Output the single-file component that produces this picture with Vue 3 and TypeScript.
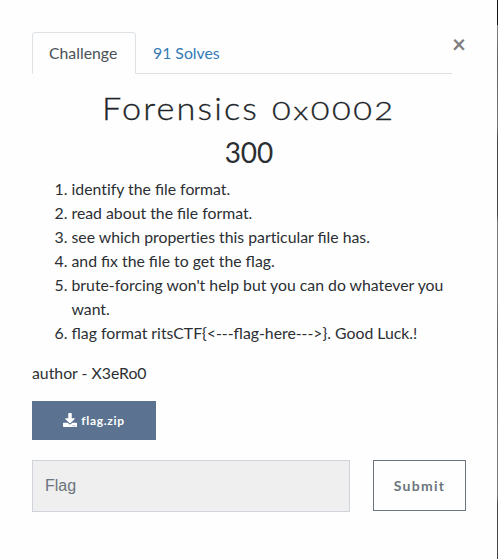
<script setup lang="ts">
import { ref } from 'vue'

const steps: string[] = [
  'identify the file format.',
  'read about the file format.',
  'see which properties this particular file has.',
  'and fix the file to get the flag.',
  "brute-forcing won't help but you can do whatever you want.",
  'flag format ritsCTF{<---flag-here--->}. Good Luck.!',
]
// Splits before each "ti" so that the pair is not joined into one glyph.
const pieces = (text: string): string[] => text.split(/(t)(?=i)/)
const answer = ref('')
</script>

<template>
  <main class="modal">
    <header class="top">
      <nav class="tabs">
        <a class="tab active">Challenge</a>
        <a class="tab">91 Solves</a>
      </nav>
      <button class="close" aria-label="Close">×</button>
    </header>
    <h2 class="name"><span class="word">Forensics</span><span class="code">0x0002</span></h2>
    <h3 class="value">300</h3>
    <ol class="steps">
      <li v-for="step in steps" :key="step"><span v-for="(piece, i) in pieces(step)" :key="i" :class="{ plain: i % 2 === 1 }">{{ piece }}</span></li>
    </ol>
    <p class="author">author - X3eRo0</p>
    <a class="file">
      <svg class="icon" viewBox="0 0 512 512"><path fill="currentColor" d="M216 0h80c13.300 0 24 10.700 24 24v168h87.700c17.800 0 26.700 21.500 14.100 34.100L269.700 378.300c-7.500 7.500-19.800 7.500-27.300 0L90.100 226.100C77.500 213.500 86.400 192 104.200 192H192V24c0-13.300 10.700-24 24-24zm296 376v112c0 13.300-10.700 24-24 24H24c-13.300 0-24-10.700-24-24V376c0-13.300 10.700-24 24-24h146.700l49 49c20.100 20.100 52.500 20.100 72.600 0l49-49H488c13.300 0 24 10.700 24 24zm-124 88c0-11-9-20-20-20s-20 9-20 20 9 20 20 20 20-9 20-20zm64 0c0-11-9-20-20-20s-20 9-20 20 9 20 20 20 20-9 20-20z" /></svg>
      <span class="label">flag.zip</span>
    </a>
    <form class="answer" @submit.prevent>
      <input v-model="answer" class="field" type="text" placeholder="Flag" />
      <button class="submit" type="submit">Submit</button>
    </form>
  </main>
</template>

<style>
body { background: #fff; overflow: hidden; }
</style>

<style scoped>
* { box-sizing: border-box; }
.modal {
  position: relative;
  height: 559px;
  padding: 32px 32px 0;
  font: 15.8px/24px Lato, sans-serif;
  color: #2b2f33;
  background: #fefefe;
}
.modal::after {
  content: '';
  position: absolute;
  top: 0;
  right: 0;
  width: 1px;
  height: 100%;
  background: linear-gradient(#101214 0 25px, #858585 25px, #606060 60px, #777 125px, #444 140px 215px, #777 222px 305px, #606060 330px, #777 430px 495px, #444 505px);
}
.top { display: flex; }
.tabs { display: flex; width: 420px; height: 42px; border-bottom: 1px solid #dee2e6; }
.tab { height: 42px; padding: 8px 16px; border: 1px solid transparent; color: #337ab7; line-height: 24px; }
.active { width: 104px; border-color: #dee2e6 #dee2e6 #fefefe; border-radius: 4px 4px 0 0; color: #495057; }
.close { width: 13px; height: 24px; padding: 0; border: 0; background: none; font: 700 24px/24px Lato, sans-serif; color: #7f7f7f; }
.name { display: flex; margin: 15px 0 0 70px; height: 39px; font: 300 32px/38px Lato, sans-serif; letter-spacing: 2px; color: #212529; -webkit-text-stroke: .3px; }
.word { width: 170px; transform: scaleX(1.07); transform-origin: left; }
.code { font-size: 26px; line-height: 43px; letter-spacing: 2px; transform: scaleX(1.24); transform-origin: left; }
.value { margin: 7px 0 0; height: 34px; text-align: center; font: 400 28px/34px Lato, sans-serif; }
.steps { margin: 8px 0 16px; padding-left: 39.5px; padding-right: 14px; }
.plain { font-variant-ligatures: none; }
.author { margin: 0 0 16px; }
.file { display: flex; align-items: center; justify-content: center; gap: 4px; width: 124px; height: 39px; padding-bottom: 1px; background: #5b7290; color: #fff; font-size: 12px; font-weight: 700; letter-spacing: .7px; }
.icon { width: 14px; height: 14px; }
.label { padding-top: 2px; }
.answer { display: flex; gap: 23px; margin-top: 20px; }
.field { width: 318px; height: 52px; padding: 0 12px; border: 1px solid #ced4da; border-radius: 0; background: #efefef; font: 16px "Liberation Sans", sans-serif; outline: 0; }
.field::placeholder { color: #6c757d; opacity: 1; }
.submit { width: 93px; height: 51px; padding: 0; border: 1px solid #6c757d; background: #fefefe; color: #6c757d; font: 700 14px Lato, sans-serif; letter-spacing: 1.3px; }
</style>
